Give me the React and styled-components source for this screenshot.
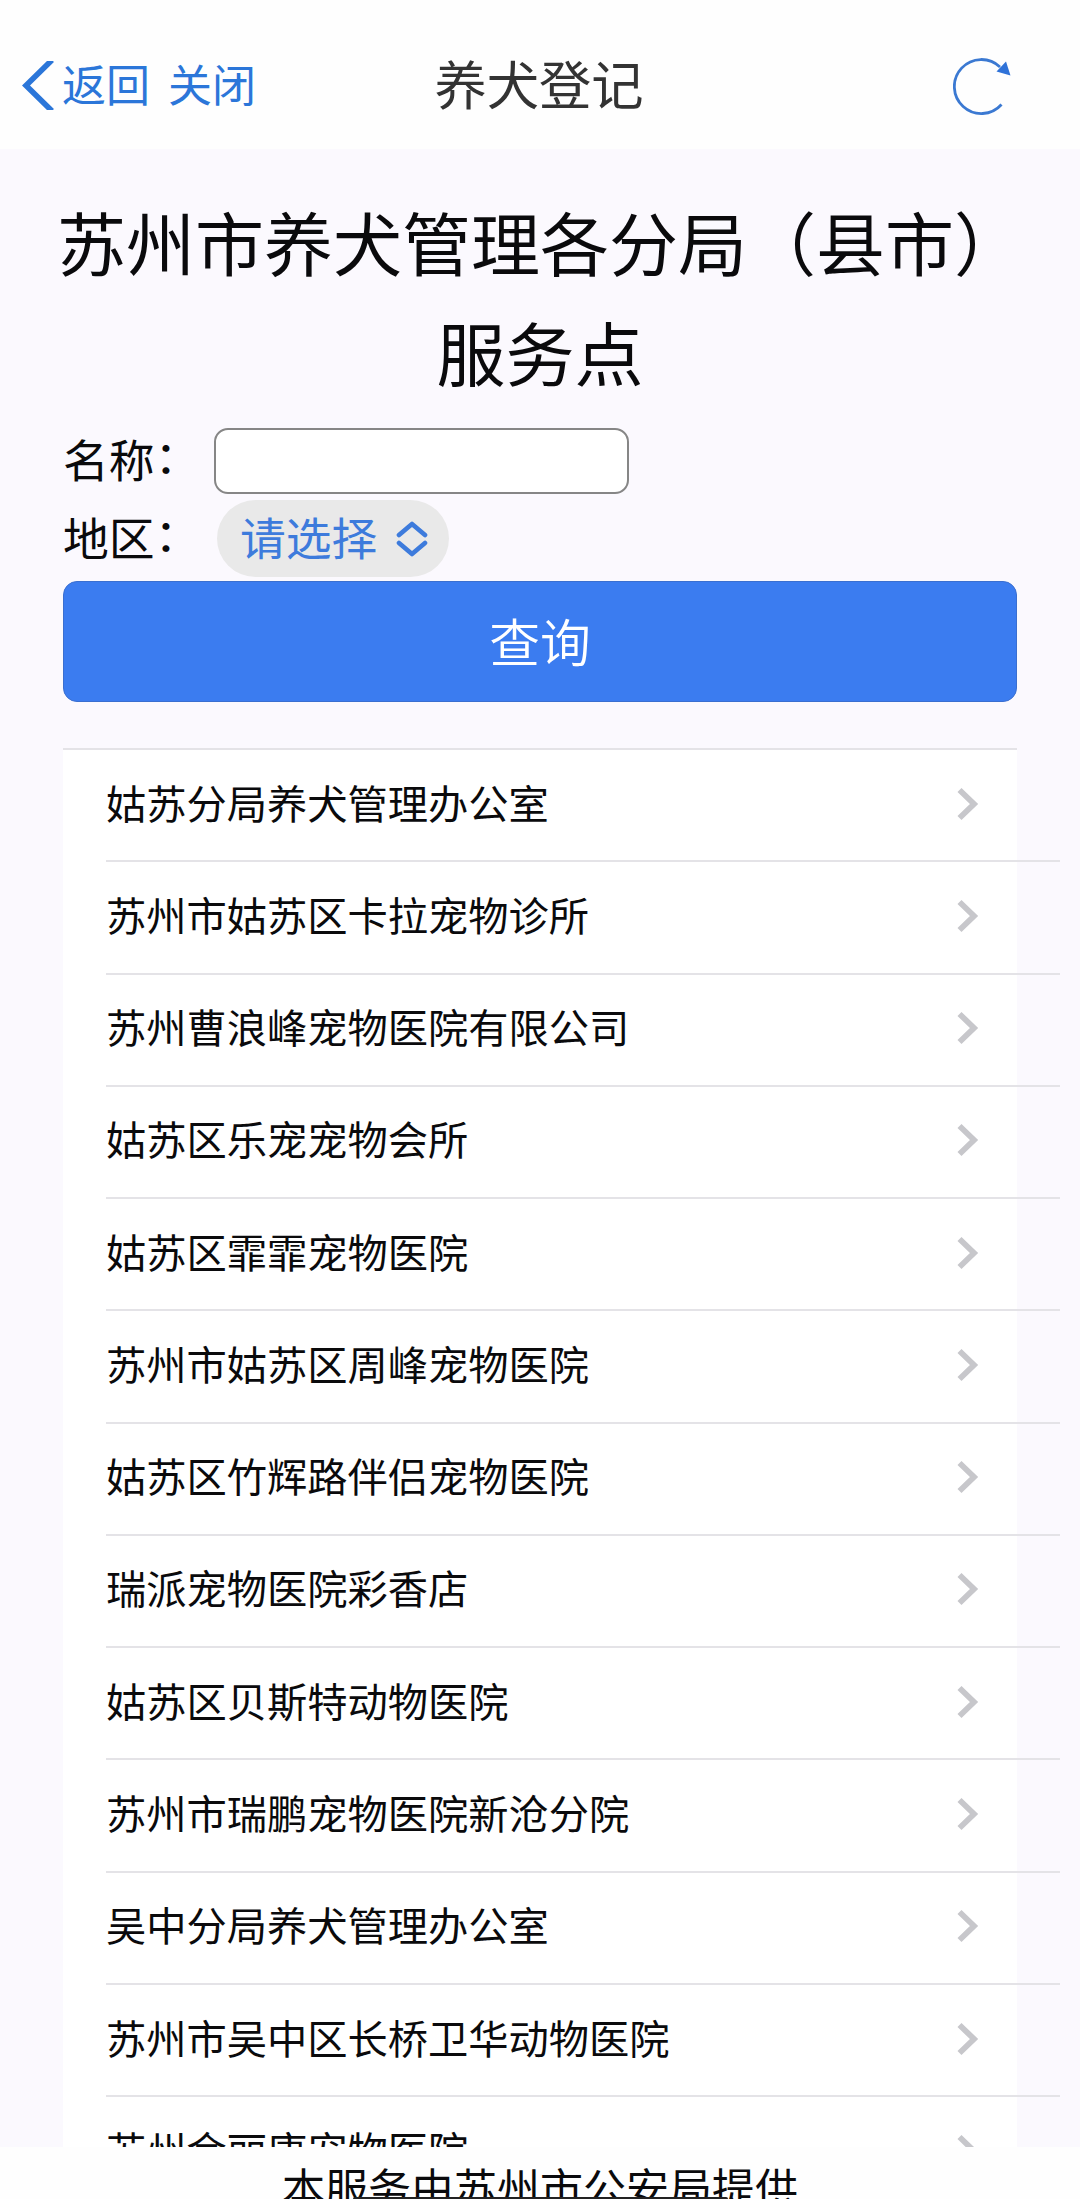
import React, {useState} from "react"
import styled, {createGlobalStyle} from "styled-components"

const GlobalStyle = createGlobalStyle`
  * { box-sizing: border-box; }
  body {
    margin: 0;
    background: #fefefe;
    color: #0a0a0c;
    font-family: "Noto Sans CJK SC", sans-serif;
  }
  button, input {
    font-family: inherit;
    margin: 0;
  }
`;

const Screen = styled.div`
  width: 1080px;
  height: 2199px;
  display: flex;
  flex-direction: column;
  overflow: hidden;
`;

const Header = styled.header`
  flex: none;
  display: grid;
  grid-template-columns: 1fr auto 1fr;
  align-items: center;
  height: 149px;
  padding: 22px 22px 0 22px;
  background: #fefefe;
  > svg {
    justify-self: end;
    margin-right: 47px;
  }
`;

const HeaderLinks = styled.div`
  display: flex;
  align-items: center;
  gap: 18px;
`;

const HeaderButton = styled.button`
  display: flex;
  align-items: center;
  gap: 8px;
  padding: 0;
  border: 0;
  background: none;
  color: #2b76d9;
  font-size: 44px;
  line-height: 60px;
  span {
    padding-bottom: 5px;
  }
`;

const HeaderTitle = styled.div`
  padding: 0 2px 7px 0;
  color: #333;
  font-size: 52.3px;
  line-height: 64px;
`;

//scrolling part of the page, cut off by the footer
const Content = styled.main`
  flex: none;
  height: 1998px;
  padding: 37px 63px 0;
  overflow: hidden;
  background: #fbf9fe;
`;

const Title = styled.h1`
  margin: 0 -20px;
  font-size: 69px;
  font-weight: 400;
  line-height: 110px;
  text-align: center;
`;

const Field = styled.div`
  display: flex;
  align-items: center;
  height: ${props => props.height}px;
  margin-top: ${props => props.top}px;
`;

const Label = styled.label`
  flex: none;
  display: flex;
  width: ${props => props.width}px;
  padding-bottom: 6px;
  font-size: 45.8px;
  line-height: 66px;
`;

//full width colon sits at the middle of the line
const Colon = styled.span`
  margin-top: -4px;
`;

const NameInput = styled.input`
  width: 415px;
  height: 66px;
  padding: 0 12px;
  border: 2px solid #868686;
  border-radius: 14px;
  background: #fff;
  font-size: 42px;
  outline: none;
`;

const AreaSelect = styled.button`
  display: flex;
  align-items: center;
  justify-content: space-between;
  width: 232px;
  height: 77px;
  padding: 0 21px 0 23px;
  border: 0;
  border-radius: 39px;
  background: #e9e9e9;
  color: #3d7bdc;
  font-size: 45.8px;
  line-height: 66px;
  span {
    padding-bottom: 5px;
  }
`;

const SearchButton = styled.button`
  display: block;
  width: 100%;
  height: 121px;
  margin-top: 4px;
  padding: 0 0 4px;
  border: 1px solid #3a6fd0;
  border-radius: 14px;
  background: #3b7cf0;
  color: #fff;
  font-size: 50.8px;
  font-weight: 350;
`;

const List = styled.ul`
  margin: 46px 0 0;
  padding: 0;
  list-style: none;
  border-top: 2px solid #e4e3e7;
  background: #fff;
`;

const Item = styled.li`
  display: flex;
  align-items: center;
  justify-content: space-between;
  width: 954px;
  height: 112.27px;
  margin-left: 43px;
  padding: 0 81px 3px 0;
  border-bottom: 2px solid #e4e3e7;
  font-size: 40.25px;
  line-height: 60px;
  span {
    padding-bottom: 4px;
  }
`;

const Footer = styled.footer`
  position: relative;
  flex: none;
  height: 52px;
  overflow: hidden;
  font-size: 43px;
  line-height: 64px;
  padding-top: 7px;
  text-align: center;
`;

//home bar peeking in from the bottom edge
const HomeBar = styled.div`
  position: absolute;
  left: 353px;
  bottom: 0;
  width: 375px;
  height: 2px;
  border-radius: 2px 2px 0 0;
  background: #222;
`;

const places = [
  "姑苏分局养犬管理办公室",
  "苏州市姑苏区卡拉宠物诊所",
  "苏州曹浪峰宠物医院有限公司",
  "姑苏区乐宠宠物会所",
  "姑苏区霏霏宠物医院",
  "苏州市姑苏区周峰宠物医院",
  "姑苏区竹辉路伴侣宠物医院",
  "瑞派宠物医院彩香店",
  "姑苏区贝斯特动物医院",
  "苏州市瑞鹏宠物医院新沧分院",
  "吴中分局养犬管理办公室",
  "苏州市吴中区长桥卫华动物医院",
  "苏州金丽康宠物医院",
]

const BackIcon = () => (
  <svg width="32" height="49" viewBox="0 0 32 49" fill="none">
    <path d="M30-1 4 24.5 30 50" stroke="#2b76d9" strokeWidth="5.6" />
  </svg>
)

const RefreshIcon = () => (
  <svg width="58" height="58" viewBox="0 0 58 58" fill="none">
    <path d="M48.5 47.5A27 27 0 1 1 47 10" stroke="#3b79d2" strokeWidth="2.8" />
    <path d="M43.5 14.5 53 4.5 57.5 18.5Z" fill="#2f72d8" />
  </svg>
)

const UpDownIcon = () => (
  <svg width="32" height="36" viewBox="0 0 32 36" fill="none" stroke="#3d7bdc" strokeWidth="4.6" strokeLinecap="round" strokeLinejoin="round">
    <path d="M3 14 16 3 29 14M3 22 16 33 29 22" />
  </svg>
)

const ArrowIcon = () => (
  <svg width="22" height="34" viewBox="0 0 22 34" fill="none">
    <path d="M2.5 3 17 17 2.5 31" stroke="#c7c7cb" strokeWidth="5.8" />
  </svg>
)

const App = () => {
  const [name, setName] = useState("")

  return (
    <Screen lang="zh-CN">
      <GlobalStyle />
      <Header>
        <HeaderLinks>
          <HeaderButton><BackIcon /><span>返回</span></HeaderButton>
          <HeaderButton><span>关闭</span></HeaderButton>
        </HeaderLinks>
        <HeaderTitle>养犬登记</HeaderTitle>
        <RefreshIcon />
      </Header>
      <Content>
        <Title>苏州市养犬管理各分局（县市）<br />服务点</Title>
        <Field height={66} top={22}>
          <Label htmlFor="name" width={151}>名称<Colon>：</Colon></Label>
          <NameInput id="name" value={name} onChange={e => setName(e.target.value)} />
        </Field>
        <Field height={77} top={6}>
          <Label as="span" width={154}>地区<Colon>：</Colon></Label>
          <AreaSelect><span>请选择</span><UpDownIcon /></AreaSelect>
        </Field>
        <SearchButton>查询</SearchButton>
        <List>
          {places.map(place => (
            <Item key={place}><span>{place}</span><ArrowIcon /></Item>
          ))}
        </List>
      </Content>
      <Footer>
        本服务由苏州市公安局提供
        <HomeBar />
      </Footer>
    </Screen>
  )
}

export default App
